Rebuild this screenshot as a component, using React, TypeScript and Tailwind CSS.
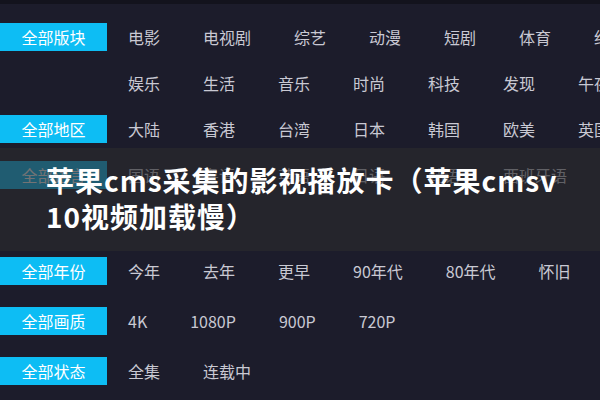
const font = { fontFamily: '"Noto Sans CJK SC", "Noto Sans", sans-serif' };

type Line = { label?: string; items: string[] };
type Block = { lines: Line[]; tall?: boolean };

const blocks: Block[] = [
  {
    lines: [
      { label: "全部版块", items: ["电影", "电视剧", "综艺", "动漫", "短剧", "体育", "纪录"] },
      { items: ["娱乐", "生活", "音乐", "时尚", "科技", "发现", "午夜"] },
    ],
  },
  { lines: [{ label: "全部地区", items: ["大陆", "香港", "台湾", "日本", "韩国", "欧美", "英国"] }] },
  {
    lines: [
      { label: "全部语言", items: ["国语", "粤语", "英语", "日语", "韩语", "西班牙语", "其它"] },
      { items: [] },
    ],
  },
  { tall: true, lines: [{ label: "全部年份", items: ["今年", "去年", "更早", "90年代", "80年代", "怀旧"] }] },
  { tall: true, lines: [{ label: "全部画质", items: ["4K", "1080P", "900P", "720P"] }] },
  { tall: true, lines: [{ label: "全部状态", items: ["全集", "连载中"] }] },
];

function FilterLine({ line, tall }: { line: Line; tall?: boolean }) {
  return (
    <div className={`flex items-center ${tall ? "h-[50px]" : "h-[46px]"}`}>
      <div className="w-[107px] shrink-0">
        {line.label && (
          <div className="flex h-[28px] items-center justify-center bg-[#0dbdf4] text-[16px] text-white">
            {line.label}
          </div>
        )}
      </div>
      <div className="ml-[21px] flex whitespace-nowrap text-[16px] text-[#c9c9d3]">
        {line.items.map((it) => (
          <span key={it} className="mr-[43px]">
            {it}
          </span>
        ))}
      </div>
    </div>
  );
}

export default function App() {
  return (
    <div className="relative h-[400px] w-[600px] overflow-hidden bg-[#1c1c2b]" style={font}>
      <div className="h-[4px] bg-[#13131d]" />
      <div className="pt-[10px]">
        {blocks.map((b, i) => (
          <div key={i} className={i === 3 ? "mt-[2px]" : ""}>
            {b.lines.map((l, j) => (
              <FilterLine key={j} line={l} tall={b.tall} />
            ))}
          </div>
        ))}
      </div>

      {/* title band over the filters */}
      <div className="absolute left-0 right-0 top-[148px] h-[103px] bg-[#2b2b2d]/[0.66] pl-[46px] pt-[14px]">
        <div className="text-[28px] font-bold leading-[36px] tracking-[1px] text-white">
          苹果cms采集的影视播放卡（苹果cmsv
          <br />
          10视频加载慢）
        </div>
      </div>
    </div>
  );
}
